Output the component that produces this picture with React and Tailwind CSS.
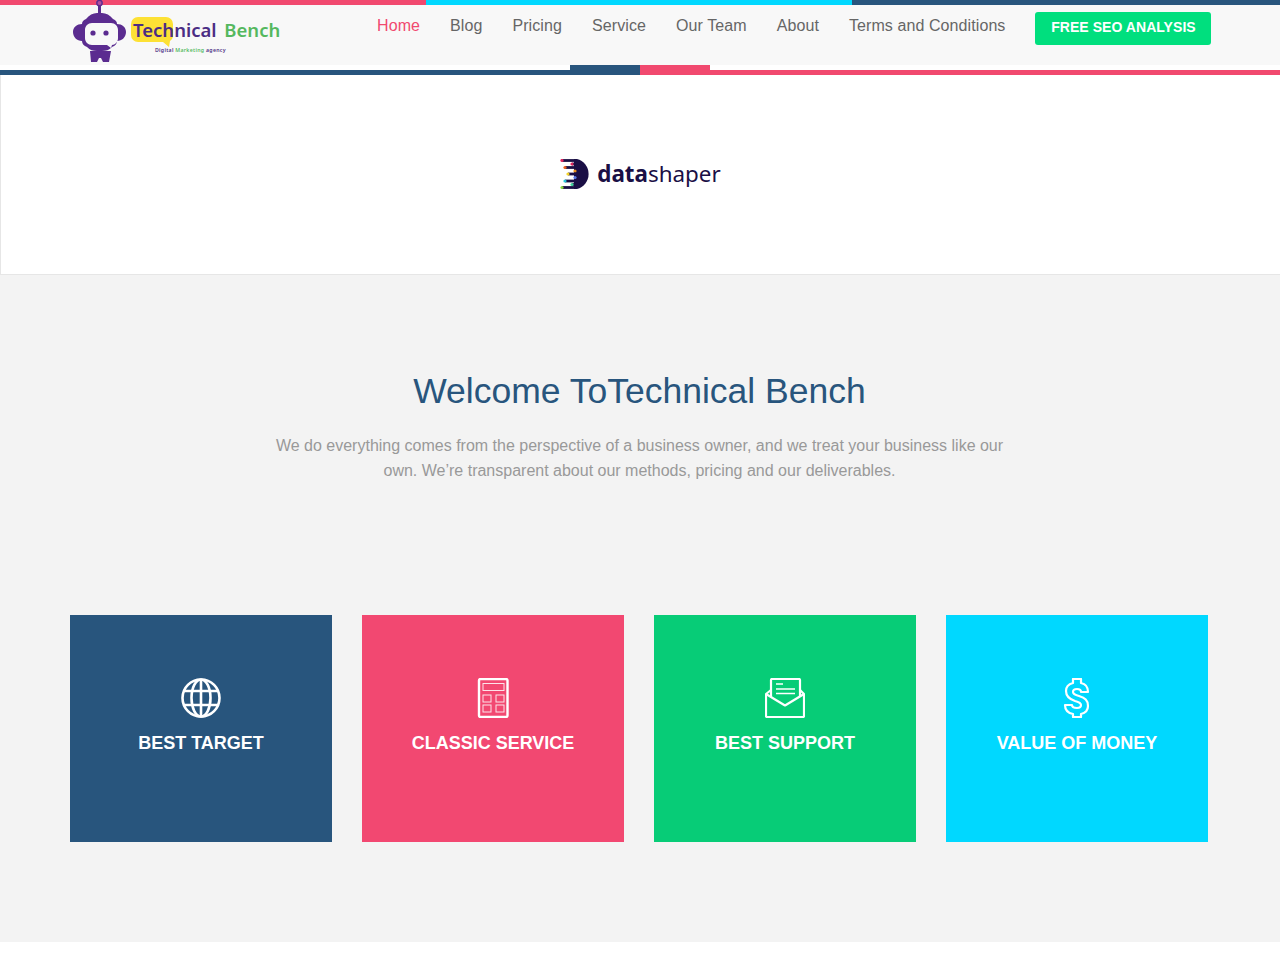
const navLinks = ["Blog", "Pricing", "Service", "Our Team", "About", "Terms and Conditions"];

function RobotLogo() {
  return (
    <svg width="56" height="64" viewBox="0 0 56 64" className="shrink-0">
      <circle cx="27.5" cy="3" r="2.7" fill="#b04fa0" stroke="#5b2c90" strokeWidth="1.4" />
      <rect x="26" y="5" width="3" height="10" fill="#5b2c90" />
      <path d="M14 19c3-4 7-6 11-6h5c4 0 8 2 11 6 3 1 4 3 4 5 5 0 9 3 9 8s-4 9-9 9c0 3-2 5-5 6-3 3-6 4-10 4H25c-4 0-7-1-10-4-3-1-5-3-5-6-5 0-9-4-9-9s4-8 9-8c0-2 1-4 4-5z" fill="#5b2c90" />
      <path d="M20 23h19c4 0 7 3 7 7v8c0 4-3 7-6 7l-1 3-4-3H20c-4 0-7-3-7-7v-8c0-4 3-7 7-7z" fill="#f8f8f8" />
      <circle cx="21" cy="33" r="2.6" fill="#5b2c90" />
      <circle cx="34" cy="33" r="2.6" fill="#5b2c90" />
      <path d="M18 51h21l-2 11h-6l-2-4h-2l-2 4h-6z" fill="#5b2c90" />
    </svg>
  );
}

function Logo() {
  return (
    <div className="flex items-start -mt-[5px] ml-[72px] w-[305px] shrink-0">
      <RobotLogo />
      <div className="relative ml-[3px] mt-[17px]">
        <svg width="44" height="31" viewBox="0 0 44 31" className="absolute left-0 top-0">
          <path d="M7 0h28a7 7 0 0 1 7 7v11a7 7 0 0 1-3 6l-1 6-6-5H7a7 7 0 0 1-7-7V7a7 7 0 0 1 7-7z" fill="#fde135" />
        </svg>
        <p className="relative pl-[2px] whitespace-nowrap font-['Noto_Sans',sans-serif] font-semibold text-[18.5px] leading-[25px] text-[#4b2d84]">
          Technical <span className="ml-[3px] text-[#55b85f]">Bench</span>
        </p>
        <p className="relative pl-[24px] mt-[4px] whitespace-nowrap font-['Noto_Sans',sans-serif] font-semibold text-[5.2px] leading-[8px] tracking-[0.3px] text-[#4b2d84]">
          Digital <span className="text-[#55b85f]">Marketing</span> agency
        </p>
      </div>
    </div>
  );
}

function Header() {
  return (
    <header>
      <div className="grid grid-cols-[426px_426px_1fr] h-[5px]">
        <div className="bg-[#f1496f]" />
        <div className="bg-[#00d8ff]" />
        <div className="bg-[#28557d]" />
      </div>
      <div className="flex h-[60px] bg-[#f8f8f8] font-['Liberation_Sans',sans-serif]">
        <Logo />
        <nav className="flex items-start gap-[30px] text-[16px] leading-[24px] tracking-[0.09px] text-[#666] pt-[9px]">
          <a className="text-[#f1496f]">Home</a>
          {navLinks.map((link) => (
            <a key={link}>{link}</a>
          ))}
        </nav>
        <a className="ml-[30px] mt-[7px] w-[176px] h-[33px] pb-[2px] flex items-center justify-center rounded-[3px] bg-[#00df7e] text-white text-[14px] tracking-[0.05px] font-bold">
          FREE SEO ANALYSIS
        </a>
      </div>
      <div className="flex justify-center h-[5px] bg-white">
        <div className="w-[70px] bg-[#28557d]" />
        <div className="w-[70px] bg-[#f1496f]" />
      </div>
      <div className="grid grid-cols-2 h-[5px]">
        <div className="bg-[#28557d]" />
        <div className="bg-[#f1496f]" />
      </div>
    </header>
  );
}

const shaperRows = [
  { y: 1.5, from: 2, to: 12, color: "#e0245e" },
  { y: 5, from: 12, to: 12, color: "#e0245e" },
  { y: 8.5, from: 5, to: 12, color: "#e8601c" },
  { y: 12, from: 15, to: 15, color: "#e8901c" },
  { y: 15, from: 8, to: 12, color: "#f5d327" },
  { y: 18.5, from: 15, to: 15, color: "#5a7be8" },
  { y: 22, from: 5, to: 12, color: "#27c4d9" },
  { y: 25.5, from: 12, to: 12, color: "#3ed39a" },
  { y: 28.5, from: 2, to: 12, color: "#8bd13f" },
];

function DataShaperLogo() {
  return (
    <div className="flex items-center gap-[5px]">
      <svg width="32" height="31" viewBox="0 0 32 31">
        <path d="M14 0h3a15.5 15.5 0 0 1 0 30h-3z" fill="#1a0f45" />
        {shaperRows.map((row) => (
          <g key={row.y}>
            <path d={`M${row.from} ${row.y}H16`} stroke="#1a0f45" strokeWidth="2.8" />
            <circle cx={row.from} cy={row.y} r="1.6" fill={row.color} />
          </g>
        ))}
      </svg>
      <p className="font-['Noto_Sans',sans-serif] text-[22.4px] leading-[32px] text-[#1a0f45]">
        <span className="font-bold">data</span>shaper
      </p>
    </div>
  );
}

function GlobeIcon() {
  return (
    <svg width="40" height="40" viewBox="0 0 40 40" fill="none" stroke="currentColor" strokeWidth="2.6">
      <circle cx="20" cy="20" r="18.5" />
      <ellipse cx="20" cy="20" rx="9.5" ry="18.5" />
      <path d="M20 1.5v37M3 13h34M3 27h34" />
    </svg>
  );
}

function CalculatorIcon() {
  return (
    <svg width="40" height="40" viewBox="0 0 40 40" fill="none" stroke="currentColor">
      <rect x="6" y="1" width="28.5" height="38" rx="1.5" strokeWidth="2.4" />
      <g strokeWidth="1" opacity="0.85">
        <rect x="10" y="5.5" width="21" height="7" />
        <rect x="10" y="17" width="8" height="7" />
        <rect x="23" y="17" width="8" height="7" />
        <rect x="10" y="27" width="8" height="7" />
        <rect x="23" y="27" width="8" height="7" />
      </g>
    </svg>
  );
}

function MailIcon() {
  return (
    <svg width="40" height="40" viewBox="0 0 40 40" fill="none" stroke="currentColor" strokeWidth="2.2" strokeLinejoin="round">
      <path d="M6 19V2a1 1 0 0 1 1-1h27a1 1 0 0 1 1 1v17" />
      <path d="M6 12 1 16v22a1 1 0 0 0 1 1h36a1 1 0 0 0 1-1V16l-4-4" />
      <path d="M1 16l19 11.5L39 16" />
      <path d="M11 6h7M11 11h19M11 15.5h19" strokeWidth="1.5" />
    </svg>
  );
}

function DollarIcon() {
  return (
    <svg width="40" height="40" viewBox="0 0 40 40" fill="none" stroke="currentColor" strokeWidth="2.2" strokeLinejoin="round">
      <path d="M16 1h8v4c5 1 7 4 7 9h-7c0-2-2-3-4-3s-4 1-4 3c0 2 2 3 6 4 6 2 9 4 9 10 0 4-3 7-7 8v3h-8v-3c-5-1-8-4-8-9h7c0 2 2 3 5 3 2 0 4-1 4-3s-2-3-6-4c-6-2-9-5-9-10s3-7 7-8z" />
    </svg>
  );
}

const features = [
  { title: "BEST TARGET", color: "bg-[#28557d]", icon: <GlobeIcon /> },
  { title: "CLASSIC SERVICE", color: "bg-[#f24871]", icon: <CalculatorIcon /> },
  { title: "BEST SUPPORT", color: "bg-[#07cc77]", icon: <MailIcon /> },
  { title: "VALUE OF MONEY", color: "bg-[#00d8ff]", icon: <DollarIcon /> },
];

export default function App() {
  return (
    <div className="min-h-[960px] bg-white font-['Liberation_Sans',sans-serif]">
      <Header />

      <section className="flex h-[200px] items-center justify-center border-l border-b border-[#e6e6e6] pb-[1px]">
        <DataShaperLogo />
      </section>

      <main className="h-[667px] bg-[#f3f3f3] pt-[92px] pl-[70px]">
        <div className="w-[1139px] text-center">
          <h1 className="text-[35.5px] leading-[48px] text-[#28557d]">Welcome ToTechnical Bench</h1>
          <p className="mx-auto mt-[18px] w-[750px] text-[16px] leading-[25px] text-[#999]">
            We do everything comes from the perspective of a business owner, and we treat your business like our own.
            We’re transparent about our methods, pricing and our deliverables.
          </p>
        </div>

        <div className="mt-[132px] flex gap-[30px]">
          {features.map((f) => (
            <div key={f.title} className={`flex h-[227px] w-[262px] flex-col items-center pt-[63px] text-white ${f.color}`}>
              {f.icon}
              <h3 className="mt-[13px] text-[18px] leading-[24px] font-bold">{f.title}</h3>
            </div>
          ))}
        </div>
      </main>
    </div>
  );
}
